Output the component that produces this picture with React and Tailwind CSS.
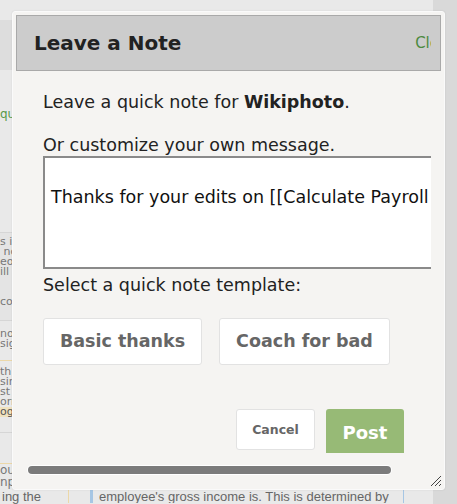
import React from 'react';

function Background() {
  return (
    <div className="flex h-full w-full">
      <div className="flex w-[433px] flex-col bg-[#e9e9e9] text-[11px] leading-[10px] text-[#777]">
        <div className="h-[20px]" />
        <div className="h-[50px] w-[14px] bg-[#dddddd]" />
        <div className="mt-[37px] h-[14px] text-[12px] leading-[14px] text-[#5a9a4a]">qu</div>
        <div className="mt-[111px] flex h-[88px] w-[34px] flex-col border-t border-[#d6d6d6] bg-[#e4e4e4] pt-[4px]">
          <div>s i</div>
          <div>&nbsp;nc</div>
          <div>eop</div>
          <div>ill</div>
          <div className="mt-[20px]">co</div>
        </div>
        <div className="h-[40px] w-[34px] border-t border-[#d6d6d6] pt-[8px]">
          <div>nos</div>
          <div>sig</div>
        </div>
        <div className="flex h-[72px] w-[34px] flex-col border-t border-[#ecd8a8] pt-[6px]">
          <div>th</div>
          <div>sin</div>
          <div>st f</div>
          <div>orr</div>
          <div className="bg-[#efe2bf] text-[#555]">og</div>
        </div>
        <div className="h-[31px] w-[34px] border-t border-[#d6d6d6]" />
        <div className="flex h-[26px] w-[34px] flex-col justify-end border-t border-[#ecd8a8] pb-[1px] text-[12px] leading-[12px]">
          <div>ou</div>
          <div>npl</div>
        </div>
        <div className="flex h-[14px] items-end whitespace-nowrap text-[13px] leading-[13px] text-[#666]" style={{ fontFamily: '"Liberation Sans", Arial, sans-serif' }}>
          <span className="w-[68px] pl-[2px]">ing the</span>
          <span className="h-full border-l border-[#ecd8a8]" />
          <span className="ml-[21px] h-full border-l-[3px] border-[#a6c6e4]" />
          <span className="ml-[6px] w-[304px] overflow-hidden">employee's gross income is. This is determined by</span>
          <span className="h-full border-l border-[#a6c6e4]" />
        </div>
      </div>
      <div className="flex-1 bg-[#d9d9d9]" />
    </div>
  );
}

function ResizeGrip() {
  return (
    <svg width="12" height="12" viewBox="0 0 12 12" className="block">
      <line x1="1" y1="11" x2="11" y2="1" stroke="#444" strokeWidth="1" />
      <line x1="5" y1="11" x2="11" y2="5" stroke="#444" strokeWidth="1" />
      <line x1="9" y1="11" x2="11" y2="9" stroke="#444" strokeWidth="1" />
    </svg>
  );
}

export default function App() {
  return (
    <div
      className="relative h-[504px] w-[457px] overflow-hidden"
      style={{ fontFamily: '"DejaVu Sans", Verdana, sans-serif' }}
    >
      <Background />

      {/* modal */}
      <div className="absolute left-[12px] top-[11px] flex h-[479px] w-[433px] flex-col rounded-[3px] border border-[#fafafa] bg-[#f5f4f2] shadow-[0_0_2px_rgba(0,0,0,0.1)]">
        <div className="mx-[3px] mt-[3px] flex h-[56px] border border-[#a9a9a9] bg-[#cccccc]">
          <div className="mr-[9px] flex flex-1 items-center overflow-hidden">
            <h2 className="ml-[17px] text-[20px] font-bold text-[#222]">Leave a Note</h2>
            <span className="ml-auto mr-[-25px] text-[15px] text-[#4d8a40]">Close</span>
          </div>
        </div>

        <div className="ml-[30px] mr-[13px] overflow-hidden text-[17.5px] leading-[21px] text-[#222]">
          <p className="mt-[21px]">
            Leave a quick note for <b>Wikiphoto</b>.
          </p>
          <p className="mt-[22px]">Or customize your own message.</p>
          <div className="h-[113px] w-[440px] border-2 border-[#8a8a8a] bg-white pl-[6px] pt-[29px] whitespace-nowrap text-[#111]">
            Thanks for your edits on [[Calculate Payroll Taxes]]!
          </div>
          <p className="mt-[6px]">Select a quick note template:</p>
          <div className="mt-[22px] flex gap-[17px]">
            <button className="h-[47px] w-[159px] rounded-[3px] border border-[#e2e2e2] bg-white font-bold text-[#666]">
              Basic thanks
            </button>
            <button className="h-[47px] w-[171px] rounded-[3px] border border-[#e2e2e2] bg-white font-bold text-[#666]">
              Coach for bad
            </button>
          </div>
          <div className="mt-[44px] flex justify-end gap-[11px] pr-[27px]">
            <button className="mb-auto h-[41px] w-[79px] rounded-[3px] border border-[#e2e2e2] bg-white text-[12.5px] font-bold text-[#666]">
              Cancel
            </button>
            <button className="h-[47px] w-[78px] rounded-[3px] bg-[#97ba76] text-[18px] font-bold text-white">
              Post
            </button>
          </div>
        </div>

        <div className="mt-[12px] ml-[14px] h-[10px] w-[365px] rounded-full bg-white p-[1px]">
          <div className="h-full w-full rounded-full bg-[#7b7b7b]" />
        </div>
        <div className="mt-auto mb-[2px] mr-[2px] flex justify-end">
          <ResizeGrip />
        </div>
      </div>
    </div>
  );
}
